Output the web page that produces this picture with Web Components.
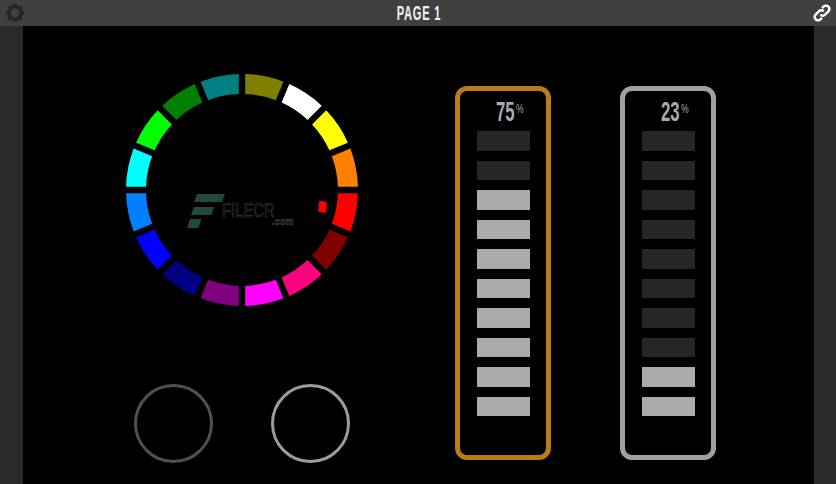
<!DOCTYPE html>
<html>
<head>
<meta charset="utf-8">
<title>Page 1</title>
<style>
	html, body { margin: 0; height: 100%; background: #000; overflow: hidden; }
	body { display: flex; flex-direction: column; width: 836px; height: 484px; }
</style>
</head>
<body>
<top-bar title-text="PAGE 1"></top-bar>
<page-body>
	<div slot="left" style="display: flex; flex-direction: column;">
		<color-wheel></color-wheel>
		<div style="display: flex; gap: 58px; margin: 78px 0 0 8px;">
			<ring-knob color="#505050"></ring-knob>
			<ring-knob color="#9c9c9c"></ring-knob>
		</div>
	</div>
	<level-meter slot="right" value="75" color="#b87d1a"></level-meter>
	<level-meter slot="right" value="23" color="#a0a0a0"></level-meter>
</page-body>
<script>
class TopBar extends HTMLElement {
	constructor() {
		super();
		this.attachShadow({ mode: "open" });
		this.shadowRoot.innerHTML = `
		<style>
			:host {
				display: flex;
				align-items: center;
				justify-content: space-between;
				height: 26px;
				padding: 0 4px 0 5px;
				background: #404040;
				flex: none;
			}
			svg { display: block; }
			#title {
				font: bold 21px "Liberation Sans", sans-serif;
				color: #f2f2f2;
				transform: scaleX(0.53);
				letter-spacing: 1.4px;
				margin: 0 0 1px 1px;
			}
		</style>
		<svg width="20" height="20" viewBox="-10 -10 20 20">
			<circle r="6.2" fill="none" stroke="#262626" stroke-width="3.4"/>
			<circle r="7.8" fill="none" stroke="#262626" stroke-width="3" stroke-dasharray="3.1 3.03" stroke-dashoffset="1.5"/>
		</svg>
		<div id="title">${this.getAttribute("title-text")}</div>
		<svg width="20" height="20" viewBox="-10 -10 20 20">
			<g transform="rotate(-45)" fill="none" stroke="#fff" stroke-width="2.5">
				<path d="M-3.4 3.4 H-5.6 a3.4 3.4 0 0 1 0 -6.8 H-1 a3.4 3.4 0 0 1 3.4 3.4"/>
				<path d="M3.4 -3.4 H5.6 a3.4 3.4 0 0 1 0 6.8 H1 a3.4 3.4 0 0 1 -3.4 -3.4"/>
			</g>
		</svg>
		`;
	}
}

class PageBody extends HTMLElement {
	constructor() {
		super();
		this.attachShadow({ mode: "open" });
		this.shadowRoot.innerHTML = `
		<style>
			:host {
				display: flex;
				flex: 1;
				background: #000;
				border-left: 23px solid #2a2a2a;
				border-right: 22px solid #2a2a2a;
				padding: 48px 0 0 103px;
			}
			#right {
				display: flex;
				gap: 69px;
				margin: 12px 0 0 97px;
			}
		</style>
		<slot name="left"></slot>
		<div id="right"><slot name="right"></slot></div>
		`;
	}
}

class ColorWheel extends HTMLElement {
	constructor() {
		super();
		this.attachShadow({ mode: "open" });
		// clockwise from 12 o'clock
		const colors = ["#808000", "#ffffff", "#ffff00", "#ff8000", "#ff0000", "#800000", "#ff0080", "#ff00ff",
			"#800080", "#000080", "#0000ff", "#0080ff", "#00ffff", "#00ff00", "#008000", "#008080"];
		const paths = colors.map((c, i) => `<path fill="${c}" d="${this.segment(i)}"/>`).join("");
		this.shadowRoot.innerHTML = `
		<style>
			:host {
				display: block;
				position: relative;
				width: 232px;
				height: 232px;
			}
			svg { display: block; }
			#mark {
				position: absolute;
				left: 61px;
				top: 120px;
				width: 108px;
				height: 34px;
			}
			#name, #com {
				position: absolute;
				font-family: "Liberation Sans", sans-serif;
				color: #000;
				transform-origin: left;
			}
			#name {
				left: 35px;
				top: 9px;
				font-size: 19.5px;
				line-height: 14px;
				transform: scaleX(0.76);
				-webkit-text-stroke: 0.7px #3c3c3c;
			}
			#com {
				left: 85px;
				top: 24px;
				font-size: 10px;
				font-weight: bold;
				line-height: 8px;
				transform: scaleX(0.92);
				-webkit-text-stroke: 0.5px #555;
			}
		</style>
		<svg width="232" height="232" viewBox="-116 -116 232 232">
			${paths}
			<polygon fill="#ff0000" points="77.3,10.7 85,12 83.7,23 76.3,21.7"/>
		</svg>
		<div id="mark">
			<svg width="40" height="36" viewBox="0 0 40 36" style="position: absolute; left: 0; top: 0">
				<g fill="#23493c">
					<polygon points="10,0 38,0 35,8 7,8"/>
					<polygon points="7,13 27,13 24.5,21 4,21"/>
					<polygon points="3,25 14.5,25 11.5,34 0,34"/>
				</g>
			</svg>
			<div id="name">FILECR</div>
			<div id="com">.com</div>
		</div>
		`;
	}

	segment(i) {
		const rOut = 116, rIn = 96, gap = 3.2;
		const rad = d => d * Math.PI / 180;
		const pt = (r, a) => `${(r * Math.sin(a)).toFixed(2)} ${(-r * Math.cos(a)).toFixed(2)}`;
		const a0 = rad(i * 22.5), a1 = rad((i + 1) * 22.5);
		const o = Math.asin(gap / rOut), n = Math.asin(gap / rIn);
		return `M${pt(rOut, a0 + o)} A${rOut} ${rOut} 0 0 1 ${pt(rOut, a1 - o)} L${pt(rIn, a1 - n)} A${rIn} ${rIn} 0 0 0 ${pt(rIn, a0 + n)} Z`;
	}
}

class RingKnob extends HTMLElement {
	constructor() {
		super();
		this.attachShadow({ mode: "open" });
		this.shadowRoot.innerHTML = `
		<style>
			:host {
				display: block;
				box-sizing: border-box;
				width: 79px;
				height: 79px;
				border-radius: 50%;
				border: 3.5px solid ${this.getAttribute("color")};
			}
		</style>
		`;
	}
}

class LevelMeter extends HTMLElement {
	constructor() {
		super();
		this.attachShadow({ mode: "open" });
		const value = Number(this.getAttribute("value"));
		const lit = Math.round(value / 10);
		let bars = "";
		for (let i = 10; i > 0; i--) {
			bars += `<div class="bar${i <= lit ? " on" : ""}"></div>`;
		}
		this.shadowRoot.innerHTML = `
		<style>
			:host {
				display: block;
				box-sizing: border-box;
				width: 96px;
				height: 374px;
				border: 5px solid ${this.getAttribute("color")};
				border-radius: 12px;
				padding-left: 17px;
			}
			#label {
				display: flex;
				align-items: flex-start;
				height: 40px;
				padding-left: 19px;
				color: #aaa;
				font-family: "Liberation Sans", sans-serif;
			}
			#num {
				font-size: 27px;
				font-weight: bold;
				line-height: 30px;
				margin-top: 6px;
				width: 20px;
				transform: scaleX(0.62);
				transform-origin: left;
			}
			#pct {
				font-size: 13px;
				line-height: 12px;
				margin-top: 12px;
				width: 8px;
				transform: scaleX(0.66);
				transform-origin: left;
			}
			#bars { display: flex; flex-direction: column; gap: 10px; }
			.bar { width: 52.5px; height: 19.56px; background: #262626; }
			.bar.on { background: #aaaaaa; }
		</style>
		<div id="label"><span id="num">${value}</span><span id="pct">%</span></div>
		<div id="bars">${bars}</div>
		`;
	}
}

customElements.define("top-bar", TopBar);
customElements.define("page-body", PageBody);
customElements.define("color-wheel", ColorWheel);
customElements.define("ring-knob", RingKnob);
customElements.define("level-meter", LevelMeter);
</script>
</body>
</html>
